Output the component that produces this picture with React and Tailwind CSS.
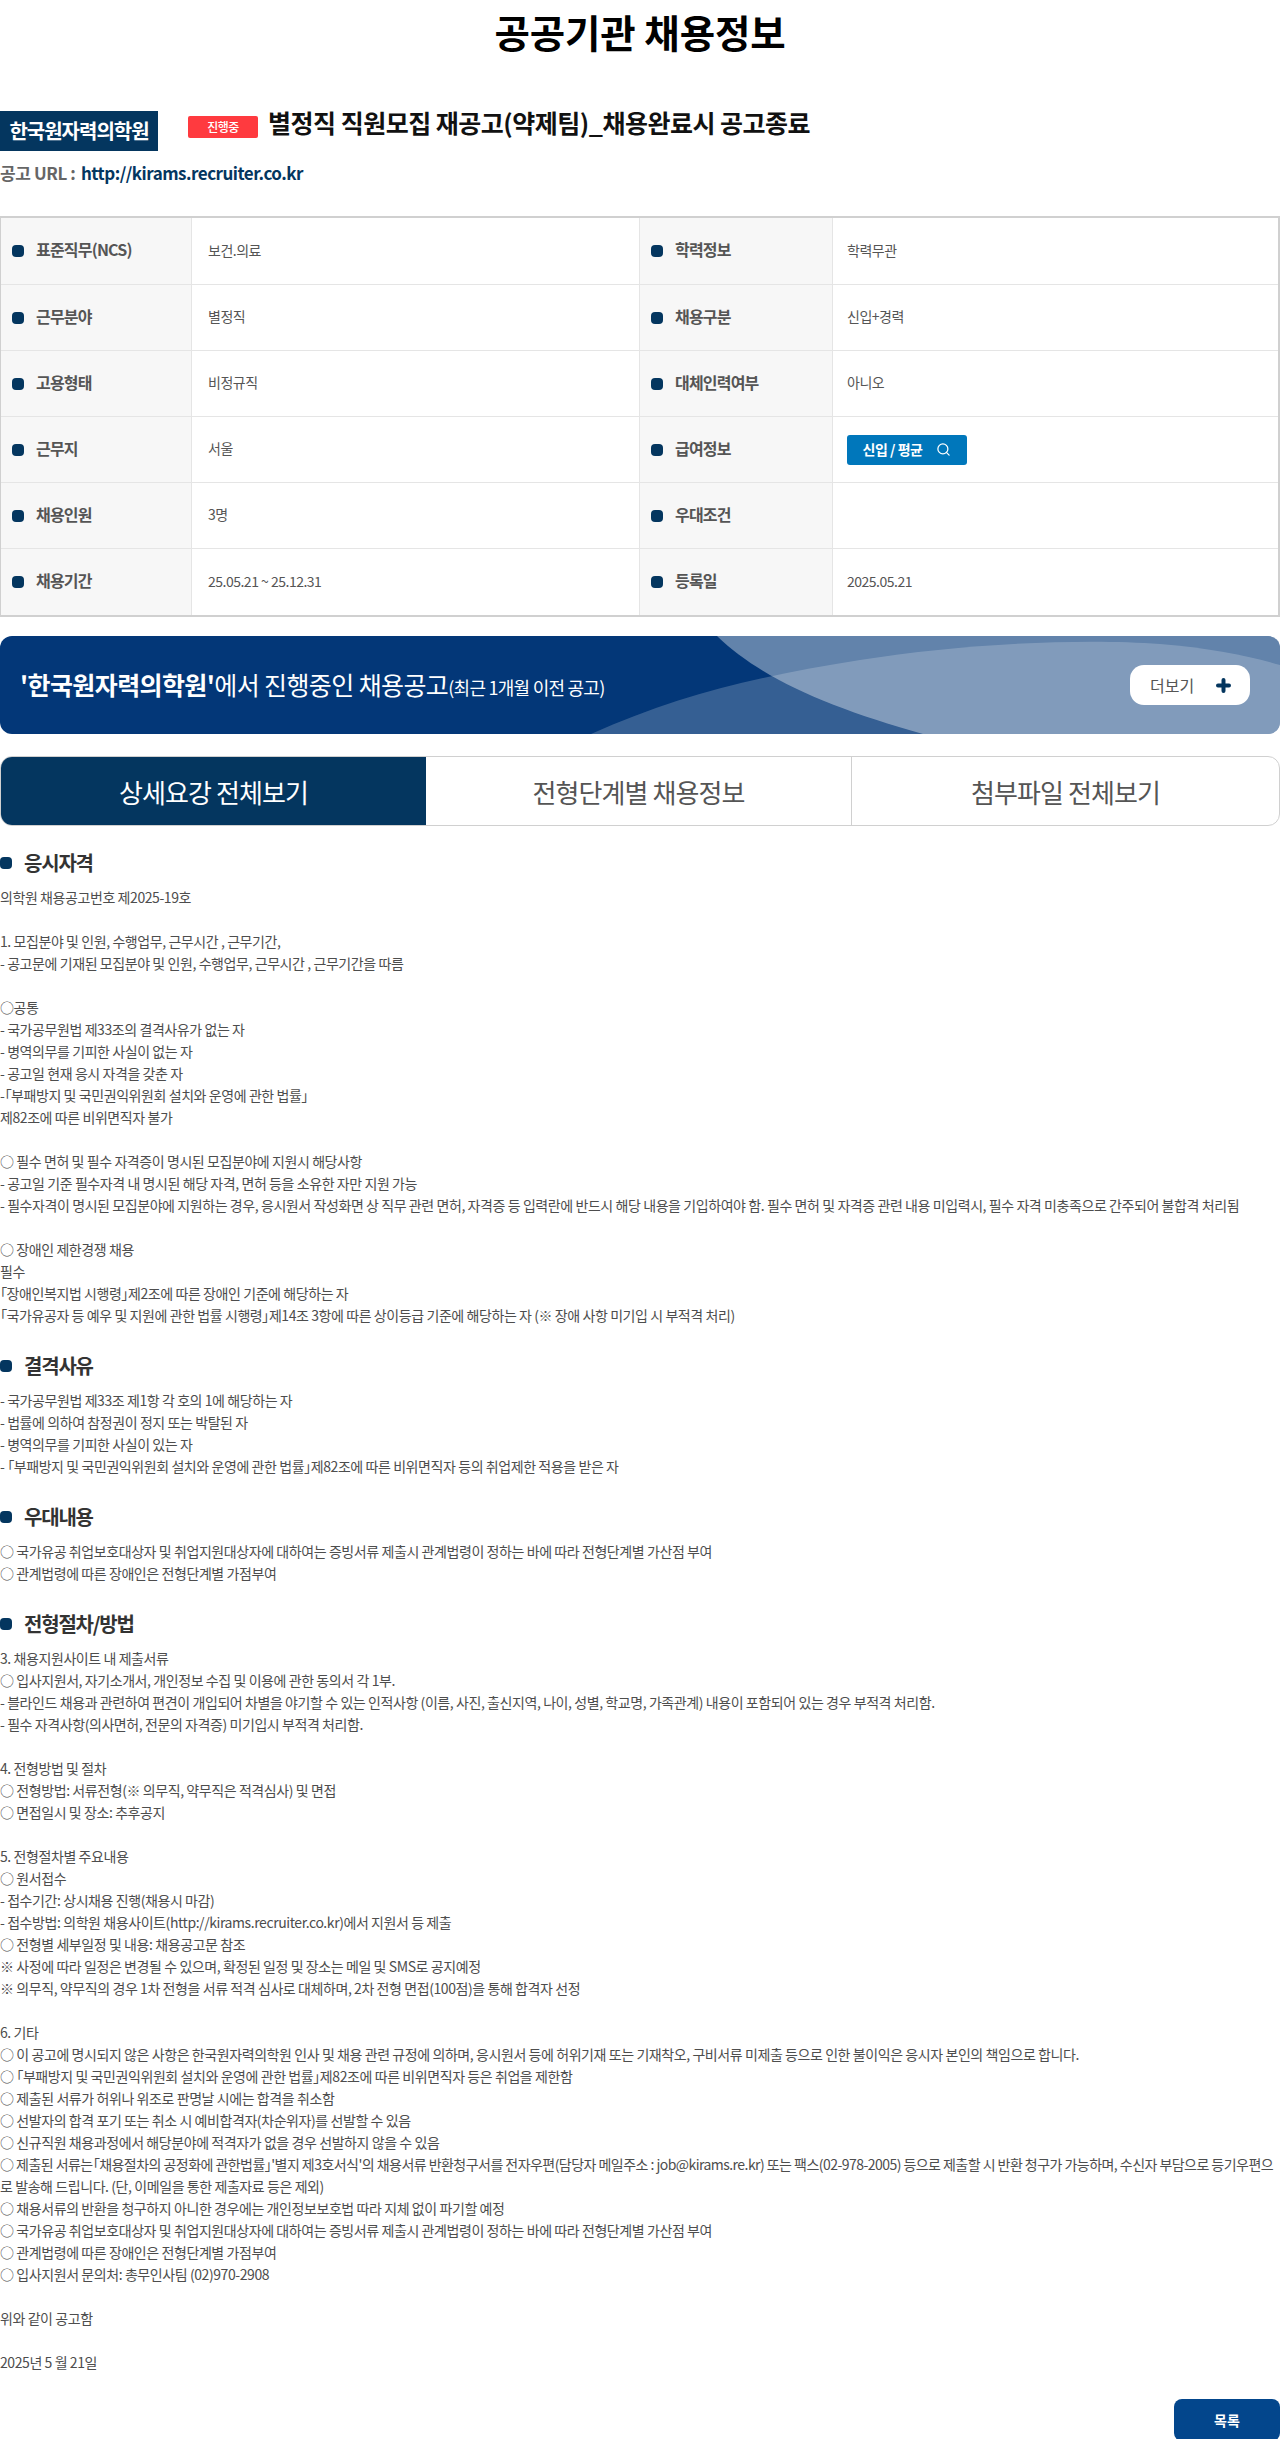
import React from "react";
import { Search } from "lucide-react";

const rows = [
  ["표준직무(NCS)", "보건.의료", "학력정보", "학력무관"],
  ["근무분야", "별정직", "채용구분", "신입+경력"],
  ["고용형태", "비정규직", "대체인력여부", "아니오"],
  ["근무지", "서울", "급여정보", "__btn"],
  ["채용인원", "3명", "우대조건", ""],
  ["채용기간", "25.05.21 ~ 25.12.31", "등록일", "2025.05.21"],
];

const LONG_LINE =
  "○ 제출된 서류는「채용절차의 공정화에 관한법률」'별지 제3호서식'의 채용서류 반환청구서를 전자우편(담당자 메일주소 : job@kirams.re.kr) 또는 팩스(02-978-2005) 등으로 제출할 시 반환 청구가 가능하며, 수신자 부담으로 등기우편으";

const sections = [
  {
    title: "응시자격",
    lines: [
      "의학원 채용공고번호 제2025-19호",
      "",
      "1. 모집분야 및 인원, 수행업무, 근무시간 , 근무기간,",
      "- 공고문에 기재된 모집분야 및 인원, 수행업무, 근무시간 , 근무기간을 따름",
      "",
      "○공통",
      "- 국가공무원법 제33조의 결격사유가 없는 자",
      "- 병역의무를 기피한 사실이 없는 자",
      "- 공고일 현재 응시 자격을 갖춘 자",
      "-「부패방지 및 국민권익위원회 설치와 운영에 관한 법률」",
      "제82조에 따른 비위면직자 불가",
      "",
      "○ 필수 면허 및 필수 자격증이 명시된 모집분야에 지원시 해당사항",
      "- 공고일 기준 필수자격 내 명시된 해당 자격, 면허 등을 소유한 자만 지원 가능",
      "- 필수자격이 명시된 모집분야에 지원하는 경우, 응시원서 작성화면 상 직무 관련 면허, 자격증 등 입력란에 반드시 해당 내용을 기입하여야 함. 필수 면허 및 자격증 관련 내용 미입력시, 필수 자격 미충족으로 간주되어 불합격 처리됨",
      "",
      "○ 장애인 제한경쟁 채용",
      "필수",
      "「장애인복지법 시행령」제2조에 따른 장애인 기준에 해당하는 자",
      "「국가유공자 등 예우 및 지원에 관한 법률 시행령」제14조 3항에 따른 상이등급 기준에 해당하는 자 (※ 장애 사항 미기입 시 부적격 처리)",
    ],
  },
  {
    title: "결격사유",
    lines: [
      "- 국가공무원법 제33조 제1항 각 호의 1에 해당하는 자",
      "- 법률에 의하여 참정권이 정지 또는 박탈된 자",
      "- 병역의무를 기피한 사실이 있는 자",
      "- 「부패방지 및 국민권익위원회 설치와 운영에 관한 법률」제82조에 따른 비위면직자 등의 취업제한 적용을 받은 자",
    ],
  },
  {
    title: "우대내용",
    lines: [
      "○ 국가유공 취업보호대상자 및 취업지원대상자에 대하여는 증빙서류 제출시 관계법령이 정하는 바에 따라 전형단계별 가산점 부여",
      "○ 관계법령에 따른 장애인은 전형단계별 가점부여",
    ],
  },
  {
    title: "전형절차/방법",
    lines: [
      "3. 채용지원사이트 내 제출서류",
      "○ 입사지원서, 자기소개서, 개인정보 수집 및 이용에 관한 동의서 각 1부.",
      "- 블라인드 채용과 관련하여 편견이 개입되어 차별을 야기할 수 있는 인적사항 (이름, 사진, 출신지역, 나이, 성별, 학교명, 가족관계) 내용이 포함되어 있는 경우 부적격 처리함.",
      "- 필수 자격사항(의사면허, 전문의 자격증) 미기입시 부적격 처리함.",
      "",
      "4. 전형방법 및 절차",
      "○ 전형방법: 서류전형(※ 의무직, 약무직은 적격심사) 및 면접",
      "○ 면접일시 및 장소: 추후공지",
      "",
      "5. 전형절차별 주요내용",
      "○ 원서접수",
      "- 접수기간: 상시채용 진행(채용시 마감)",
      "- 접수방법: 의학원 채용사이트(http://kirams.recruiter.co.kr)에서 지원서 등 제출",
      "○ 전형별 세부일정 및 내용: 채용공고문 참조",
      "※ 사정에 따라 일정은 변경될 수 있으며, 확정된 일정 및 장소는 메일 및 SMS로 공지예정",
      "※ 의무직, 약무직의 경우 1차 전형을 서류 적격 심사로 대체하며, 2차 전형 면접(100점)을 통해 합격자 선정",
      "",
      "6. 기타",
      "○ 이 공고에 명시되지 않은 사항은 한국원자력의학원 인사 및 채용 관련 규정에 의하며, 응시원서 등에 허위기재 또는 기재착오, 구비서류 미제출 등으로 인한 불이익은 응시자 본인의 책임으로 합니다.",
      "○ 「부패방지 및 국민권익위원회 설치와 운영에 관한 법률」제82조에 따른 비위면직자 등은 취업을 제한함",
      "○ 제출된 서류가 허위나 위조로 판명날 시에는 합격을 취소함",
      "○ 선발자의 합격 포기 또는 취소 시 예비합격자(차순위자)를 선발할 수 있음",
      "○ 신규직원 채용과정에서 해당분야에 적격자가 없을 경우 선발하지 않을 수 있음",
      LONG_LINE,
      "로 발송해 드립니다. (단, 이메일을 통한 제출자료 등은 제외)",
      "○ 채용서류의 반환을 청구하지 아니한 경우에는 개인정보보호법 따라 지체 없이 파기할 예정",
      "○ 국가유공 취업보호대상자 및 취업지원대상자에 대하여는 증빙서류 제출시 관계법령이 정하는 바에 따라 전형단계별 가산점 부여",
      "○ 관계법령에 따른 장애인은 전형단계별 가점부여",
      "○ 입사지원서 문의처: 총무인사팀 (02)970-2908",
      "",
      "위와 같이 공고함",
      "",
      "2025년 5 월 21일",
    ],
  },
];

function Dot() {
  return <span className="block h-3 w-3 shrink-0 rounded-[4px] bg-[#04365f]" />;
}

function LabelCell({ text }) {
  return (
    <div className="flex items-center gap-3 border-r border-[#e5e5e5] bg-[#f7f7f7] pl-[11px] text-[16px] leading-none font-bold tracking-[-0.8px] text-[#555]">
      <Dot />
      <span className="pb-[4px]">{text}</span>
    </div>
  );
}

function ValueCell({ text, last }) {
  return (
    <div className={`flex items-center text-[14px] tracking-[-0.5px] text-[#555] ${last ? "pl-[14px]" : "border-r border-[#e5e5e5] pl-4"}`}>
      {text === "__btn" ? (
        <button className="flex h-[30px] w-[120px] items-center justify-center gap-[14px] rounded-[3px] bg-[#0077bb] text-[14px] font-bold text-white">
          <span>신입 / 평균</span>
          <Search size={15} strokeWidth={2} />
        </button>
      ) : (
        <span className="pb-[2px]">{text}</span>
      )}
    </div>
  );
}

export default function App() {
  return (
    <div className="w-[1280px] overflow-hidden bg-white font-['Noto_Sans_CJK_KR','Noto_Sans',sans-serif] text-[#555]">
      <h1 className="h-[68px] pt-[3px] text-center text-[38.5px] leading-[56px] font-bold tracking-[-0.1px] text-black">공공기관 채용정보</h1>

      <div className="mt-[43px] flex h-10 items-start">
        <div className="flex h-10 w-[158px] items-center justify-center bg-[#04365f] text-[20px] font-bold tracking-[-1px] text-white">한국원자력의학원</div>
        <span className="mt-[5px] ml-[30px] flex h-[22px] w-[70px] items-center justify-center rounded-[2px] bg-[#ff3a3f] text-[12px] font-medium tracking-[-0.5px] text-white">진행중</span>
        <span className="ml-[10px] text-[25px] leading-[22px] font-bold tracking-[-0.5px] text-[#111]">별정직 직원모집 재공고(약제팀)_채용완료시 공고종료</span>
      </div>

      <p className="mt-[8px] text-[17px] leading-[28px] font-bold tracking-[-0.4px] text-[#666]">
        공고 URL : <span className="ml-[2px] tracking-[-0.5px] text-[#04365f]">http://kirams.recruiter.co.kr</span>
      </p>

      <div className="mt-[29px] border-y-2 border-r-2 border-l border-[#d0d0d0]">
        <div className="grid grid-cols-[191px_448px_193px_1fr]">
          {rows.map((r, i) => (
            <div key={i} className={`col-span-4 grid grid-cols-subgrid ${i === 0 ? "h-[67px]" : "h-[66px]"} ${i < 5 ? "border-b border-[#e5e5e5]" : ""}`}>
              <LabelCell text={r[0]} />
              <ValueCell text={r[1]} />
              <LabelCell text={r[2]} />
              <ValueCell text={r[3]} last />
            </div>
          ))}
        </div>
      </div>

      <div className="relative mt-[19px] h-[98px] overflow-hidden rounded-xl bg-[#033778]">
        <svg className="absolute inset-0 h-full w-full" viewBox="0 0 1280 98" preserveAspectRatio="none">
          <path d="M717 0 C760 42 830 72 923 98 L1280 98 L1280 0 Z" fill="#fff" fillOpacity="0.38" />
          <path d="M591 98 C680 58 760 40 860 24 C960 8 1080 2 1160 8 C1210 12 1250 20 1280 29 L1280 98 Z" fill="#fff" fillOpacity="0.2" />
        </svg>
        <div className="relative flex h-full items-center justify-between pr-[30px] pl-5">
          <p className="text-[25px] tracking-[-0.6px] text-white">
            <b>'한국원자력의학원'</b>에서 진행중인 채용공고<span className="text-[18px] tracking-[-0.75px]">(최근 1개월 이전 공고)</span>
          </p>
          <button className="flex h-10 w-[120px] items-center gap-[22px] rounded-[14px] bg-white pl-5 text-[16px] text-[#555]">
            <span>더보기</span>
            <svg width="15" height="15" viewBox="0 0 15 15">
              <path d="M7.5 2v11M2 7.5h11" stroke="#04365f" strokeWidth="4" strokeLinecap="round" />
            </svg>
          </button>
        </div>
      </div>

      <div className="mt-[22px] flex h-[70px] overflow-hidden rounded-xl border border-[#d0d0d0] text-[26px] tracking-[-0.9px]">
        <div className="flex w-[425px] items-center justify-center bg-[#04365f] text-white">상세요강 전체보기</div>
        <div className="flex w-[426px] items-center justify-center border-r border-[#d0d0d0] text-[#555]">전형단계별 채용정보</div>
        <div className="flex flex-1 items-center justify-center text-[#555]">첨부파일 전체보기</div>
      </div>

      <div className="mt-[-3px]">
        {sections.map((s) => (
          <section key={s.title} className="mt-[25px]">
            <h2 className="mb-[8px] flex h-[30px] items-center gap-3 text-[20px] font-bold tracking-[-1.2px] text-[#333]">
              <Dot />
              <span>{s.title}</span>
            </h2>
            <div className="text-[14px] leading-[22px] tracking-[-0.42px] break-all text-[#4d4d4d] [font-feature-settings:'palt']">
              {s.lines.map((l, i) => (
                <p key={i} className={l === LONG_LINE ? "whitespace-nowrap tracking-[-0.54px]" : "min-h-[22px]"}>{l}</p>
              ))}
            </div>
          </section>
        ))}
      </div>

      <div className="mt-[26px] flex justify-end">
        <button className="h-[42px] w-[106px] rounded-lg bg-[#03468c] text-[14px] font-bold text-white">목록</button>
      </div>
    </div>
  );
}
